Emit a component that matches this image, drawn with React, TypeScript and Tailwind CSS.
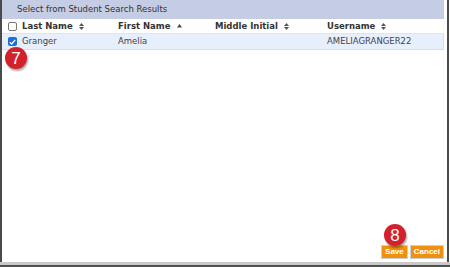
import React from "react";

const SortBoth = () => (
  <svg width="5" height="7" viewBox="0 0 5 7" className="ml-[6px]">
    <path d="M2.5 0 L5 3 H0 Z" fill="#555" />
    <path d="M2.5 7 L5 4 H0 Z" fill="#555" />
  </svg>
);

const SortUp = () => (
  <svg width="5" height="4" viewBox="0 0 5 4" className="ml-[7px]">
    <path d="M2.5 0 L5 3.5 H0 Z" fill="#444" />
  </svg>
);

const Checkbox = ({ checked }: { checked?: boolean }) =>
  checked ? (
    <div className="w-[9px] h-[9px] rounded-[2px] bg-[#1a6fdc] flex items-center justify-center">
      <svg width="7" height="6" viewBox="0 0 7 6">
        <path d="M0.8 3.2 L2.7 5 L6.2 0.9" stroke="#fff" strokeWidth="1.4" fill="none" />
      </svg>
    </div>
  ) : (
    <div className="w-[9px] h-[9px] rounded-[2px] border border-[#777] bg-white" />
  );

const Badge = ({ n, className }: { n: string; className: string }) => (
  <div
    className={`absolute w-[22px] h-[22px] rounded-full bg-[#d3212c] text-white flex items-center justify-center text-[17px] leading-none font-['Liberation_Sans',sans-serif] shadow-[1px_2px_2px_rgba(0,0,0,0.35)] ${className}`}
  >
    {n}
  </div>
);

export default function App() {
  return (
    <div className="relative w-[450px] h-[267px] bg-white flex flex-col overflow-hidden font-['DejaVu_Sans',sans-serif] text-[8.5px]">
      <div className="flex-1 flex border-l-2 border-[#4a4a4a]">
        <div className="flex-1 flex flex-col">
          <div className="h-[19px] bg-[#c5cde4] flex items-center pl-[15px] text-[#333]">
            Select from Student Search Results
          </div>
          <div className="h-[15px] flex items-center border-b border-[#dfe5f0] font-bold text-[#333]">
            <div className="w-[20px] flex justify-center pl-[1px]">
              <Checkbox />
            </div>
            <div className="w-[96px] flex items-center">
              Last Name
              <SortBoth />
            </div>
            <div className="w-[97px] flex items-center">
              First Name
              <SortUp />
            </div>
            <div className="w-[112px] flex items-center">
              Middle Initial
              <SortBoth />
            </div>
            <div className="flex items-center">
              Username
              <SortBoth />
            </div>
          </div>
          <div className="h-[16px] flex items-center bg-[#e7eefc] border-b border-r border-[#d8e0ef] text-[#444]">
            <div className="w-[20px] flex justify-center pl-[1px]">
              <Checkbox checked />
            </div>
            <div className="w-[96px]">Granger</div>
            <div className="w-[97px]">Amelia</div>
            <div className="w-[112px]"></div>
            <div>AMELIAGRANGER22</div>
          </div>
          <div className="flex-1" />
          <div className="flex justify-end gap-[2px] mb-[3px]">
            <button className="h-[14px] px-[3px] border border-[#cfcfcf] bg-[#f0900f] text-white font-bold text-[8px] font-['Liberation_Sans',sans-serif] flex items-center">
              Save
            </button>
            <button className="h-[14px] px-[3px] border border-[#cfcfcf] bg-[#f0900f] text-white font-bold text-[8px] font-['Liberation_Sans',sans-serif] flex items-center">
              Cancel
            </button>
          </div>
        </div>
        <div className="w-[3px]" />
        <div className="w-[2px] bg-[#4a4a4a]" />
        <div className="w-[1px]" />
      </div>
      <div className="h-[3px] bg-[#c9c9c9]" />
      <div className="h-[2px] bg-[#4f4f4f]" />
      <Badge n="7" className="left-[5px] top-[47px]" />
      <Badge n="8" className="left-[384px] top-[224px]" />
    </div>
  );
}
